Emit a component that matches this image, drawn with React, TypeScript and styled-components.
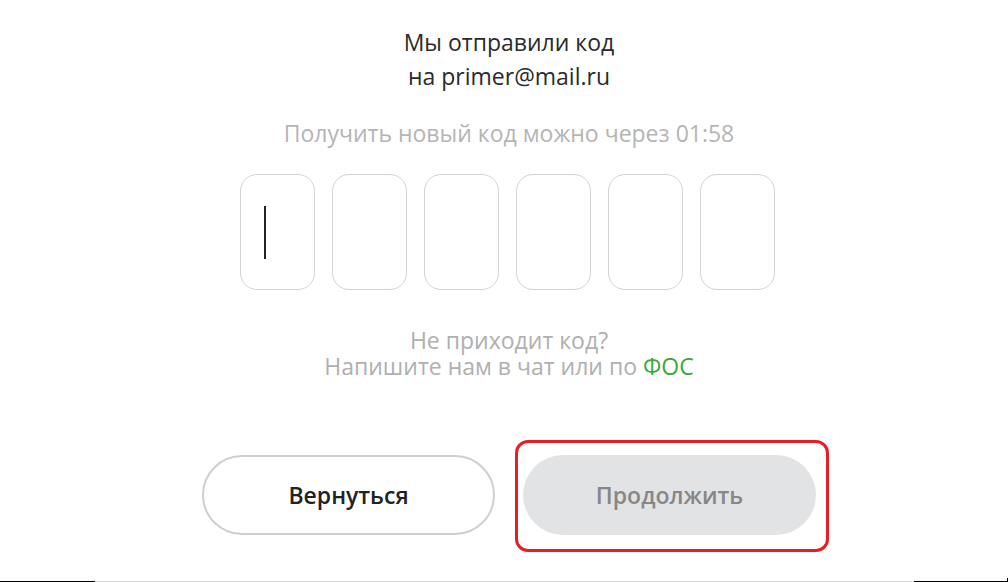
import styled, { createGlobalStyle } from 'styled-components';

const CODE_LENGTH = 6;

function App() {
  return (
    <>
      <GlobalStyle />
      <Page>
        <Content>
          <Title>
            Мы отправили код
            <br />
            на primer@mail.ru
          </Title>
          <Timer>Получить новый код можно через 01:58</Timer>
          <CodeRow>
            {Array.from({ length: CODE_LENGTH }).map((_, i) => (
              <CodeCell key={i}>{i === 0 && <Caret />}</CodeCell>
            ))}
          </CodeRow>
          <Help>
            Не приходит код?
            <br />
            Напишите нам в чат или по <HelpLink href='#'>ФОС</HelpLink>
          </Help>
          <Actions>
            <BackButton type='button'>Вернуться</BackButton>
            <Highlighted>
              <NextButton type='button' disabled>
                Продолжить
              </NextButton>
            </Highlighted>
          </Actions>
        </Content>
        <BottomLine>
          <Segment $dark $width={95} />
          <Segment />
          <Segment $dark $width={93} />
          <Tick />
        </BottomLine>
      </Page>
    </>
  );
}

export default App;

const GlobalStyle = createGlobalStyle`
  html, body {
    margin: 0;
    padding: 0;
    background: #fff;
  }

  body {
    font-family: 'Open Sans', 'Noto Sans', sans-serif;
  }
`;

const Page = styled.div`
  width: 1008px;
  height: 582px;
  display: flex;
  flex-direction: column;
  overflow: hidden;
`;

const Content = styled.div`
  display: flex;
  flex-direction: column;
  align-items: center;
  padding: 25px 0 0 10px;
`;

const Title = styled.div`
  font-size: 23px;
  line-height: 34px;
  color: #2b2b2b;
  text-align: center;
`;

const Timer = styled.div`
  margin-top: 25px;
  font-size: 23px;
  line-height: 30px;
  color: #b5b5b5;
`;

const CodeRow = styled.div`
  display: flex;
  gap: 17px;
  margin-top: 26px;
  margin-right: 3px;
`;

const CodeCell = styled.div`
  box-sizing: border-box;
  width: 75px;
  height: 116px;
  border: 1.5px solid #d4d4d4;
  border-radius: 17px;
  display: flex;
  align-items: center;
  padding-left: 23px;
`;

const Caret = styled.span`
  display: block;
  width: 2px;
  height: 53px;
  background: #222;
`;

const Help = styled.div`
  margin-top: 37px;
  font-size: 23px;
  line-height: 26px;
  color: #b0b0b0;
  text-align: center;
`;

const HelpLink = styled.a`
  color: #3ca83a;
  text-decoration: none;
`;

const Actions = styled.div`
  display: flex;
  gap: 28px;
  margin-top: 76px;
`;

const Button = styled.button`
  box-sizing: border-box;
  width: 293px;
  height: 80px;
  border-radius: 40px;
  font-family: 'Open Sans', 'Noto Sans', sans-serif;
  font-size: 23px;
  font-weight: 600;
  cursor: pointer;
`;

const BackButton = styled(Button)`
  background: #fff;
  border: 2.5px solid #cfcfcf;
  color: #222;
`;

const NextButton = styled(Button)`
  background: #e2e3e5;
  border: none;
  color: #878787;
  cursor: default;
`;

const Highlighted = styled.div`
  position: relative;

  &::after {
    content: '';
    position: absolute;
    top: -15px;
    bottom: -17px;
    left: -8px;
    right: -13px;
    border: 3px solid #e81d25;
    border-radius: 13px;
    pointer-events: none;
  }
`;

const BottomLine = styled.div`
  margin-top: auto;
  display: flex;
  align-items: flex-end;
  height: 4px;
`;

const Segment = styled.div<{ $dark?: boolean; $width?: number }>`
  height: 1px;
  flex: ${(p) => (p.$width ? `0 0 ${p.$width}px` : '1')};
  background: ${(p) => (p.$dark ? '#000' : '#dcdcdc')};
`;

const Tick = styled.div`
  width: 1px;
  height: 4px;
  background: #000;
`;
